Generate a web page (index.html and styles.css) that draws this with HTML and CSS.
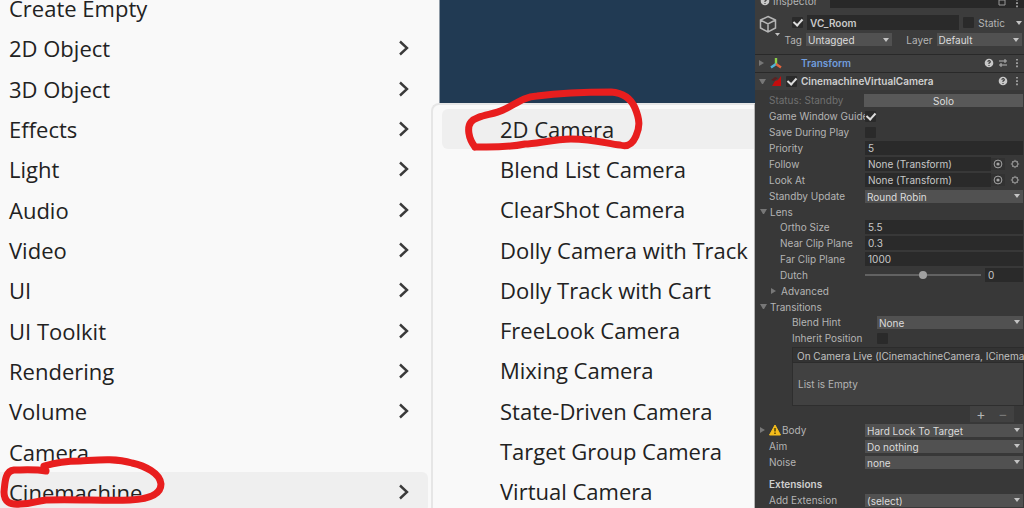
FILE: index.html
```
<!DOCTYPE html>
<html lang="en">
  <head>
    <meta charset="UTF-8" />
    <meta name="viewport" content="width=device-width, initial-scale=1.0" />
    <title>Cinemachine 2D Camera</title>
    <link rel="stylesheet" href="styles.css">
  </head>
  <body>
    <!-- shared icons -->
    <svg class="sprite" width="0" height="0">
      <symbol id="chevron" viewBox="0 0 12 18">
        <path d="M2 2.5 L9 9 L2 15.5" fill="none" stroke="#3a3a3a" stroke-width="2.4" />
      </symbol>
      <symbol id="help" viewBox="0 0 10 10">
        <circle cx="5" cy="5" r="4.3" fill="#c8c8c8" />
        <path d="M3.6 3.7 Q5 1.8 6.3 3.3 Q6.6 4.4 5 5.1 V6 M5 6.9 V8" fill="none" stroke="#3a3a3a" stroke-width="1.1" />
      </symbol>
      <symbol id="dots" viewBox="0 0 10 10">
        <path d="M5 1 V2.6 M5 4.3 V5.9 M5 7.6 V9.2" stroke="#b4b4b4" stroke-width="1.6" />
      </symbol>
      <symbol id="gear" viewBox="0 0 10 10">
        <circle cx="5" cy="5" r="2.8" fill="none" stroke="#8c8c8c" stroke-width="1.3" />
        <path d="M5 .8V2M5 8V9.2M.8 5H2M8 5H9.2M2 2l.9.9M7.1 7.1l.9.9M8 2l-.9.9M2.9 7.1L2 8" stroke="#8c8c8c" />
      </symbol>
      <symbol id="target" viewBox="0 0 10 10">
        <circle cx="5" cy="5" r="3.9" fill="none" stroke="#a5a5a5" />
        <circle cx="5" cy="5" r="1.6" fill="#a5a5a5" />
      </symbol>
    </svg>

    <main class="scene">
      <nav class="menu">
        <button>Create Empty</button>
        <button>2D Object <svg><use href="#chevron" /></svg></button>
        <button>3D Object <svg><use href="#chevron" /></svg></button>
        <button>Effects <svg><use href="#chevron" /></svg></button>
        <button>Light <svg><use href="#chevron" /></svg></button>
        <button>Audio <svg><use href="#chevron" /></svg></button>
        <button>Video <svg><use href="#chevron" /></svg></button>
        <button>UI <svg><use href="#chevron" /></svg></button>
        <button>UI Toolkit <svg><use href="#chevron" /></svg></button>
        <button>Rendering <svg><use href="#chevron" /></svg></button>
        <button>Volume <svg><use href="#chevron" /></svg></button>
        <button>Camera</button>
        <button class="active">Cinemachine <svg><use href="#chevron" /></svg></button>
      </nav>

      <nav class="submenu">
        <button class="active">2D Camera</button>
        <button>Blend List Camera</button>
        <button>ClearShot Camera</button>
        <button>Dolly Camera with Track</button>
        <button>Dolly Track with Cart</button>
        <button>FreeLook Camera</button>
        <button>Mixing Camera</button>
        <button>State-Driven Camera</button>
        <button>Target Group Camera</button>
        <button>Virtual Camera</button>
      </nav>

      <!-- hand drawn marks -->
      <svg class="marks" width="755" height="508">
        <path d="M46 471 C35 469 22 470 14 470 C5 471 5 482 4 492 C4 502 10 505 20 504 C32 504 36 501 46 500 C75 499 105 501 130 500 C150 499 161 494 161 484 C160 473 145 466 132 463 C115 458 98 460 80 461 C66 461 54 463 44 466" />
        <path d="M475 147 C468 138 467 127 471 122 C477 115 493 115 503 110 C515 105 522 97 537 96 C560 93 590 92 611 92 C625 93 632 101 635 108 C640 120 640 127 636 136 C632 145 627 147 620 145 C608 144 595 139 571 139 C555 139 535 144 525 144 C505 148 490 147 475 147" />
      </svg>
    </main>

    <aside class="inspector">
      <div class="tabs">
        <div class="tab"><svg class="icon"><use href="#help" /></svg>Inspector</div>
        <svg class="icon"><path d="M2 2h6v5H2z" fill="none" stroke="#999" /></svg>
        <svg class="icon"><use href="#dots" /></svg>
      </div>

      <header class="object">
        <svg class="cube" viewBox="0 0 22 22">
          <path d="M9 1.5 L16.5 5 V13 L9 17 L1.5 13 V5 Z M1.5 5 L9 9 L16.5 5 M9 9 V17" fill="none" stroke="#b5b5b5" stroke-width="1.5" />
          <path d="M16 18 h5 l-2.500 3z" fill="#c4c4c4" />
        </svg>
        <div class="object-rows">
          <div class="object-row">
            <input type="checkbox" aria-label="Active" checked>
            <input type="text" class="name" aria-label="Name" value="VC_Room">
            <input type="checkbox" id="static">
            <label for="static">Static</label>
            <i class="caret"></i>
          </div>
          <div class="object-row tags">
            <label for="tag">Tag</label>
            <span class="select"><select id="tag"><option>Untagged</option></select></span>
            <label for="layer" class="layer">Layer</label>
            <span class="select"><select id="layer"><option>Default</option></select></span>
          </div>
        </div>
      </header>

      <div class="component">
        <i class="fold closed"></i>
        <svg class="icon wide" viewBox="0 0 12 12">
          <path d="M6 7 V1" stroke="#8fd14a" stroke-width="2.4" />
          <path d="M6 7 L1 10.500" stroke="#4fb3d9" stroke-width="2.4" />
          <path d="M6 7 L11 10.500" stroke="#e0643c" stroke-width="2.4" />
        </svg>
        <span class="spacer"></span>
        <b class="link">Transform</b>
        <svg class="icon"><use href="#help" /></svg>
        <svg class="icon"><path d="M1 3h8M1 7h8M7 1v4M3 5v4" stroke="#b4b4b4" fill="none" /></svg>
        <svg class="icon"><use href="#dots" /></svg>
      </div>
      <div class="component">
        <i class="fold"></i>
        <svg class="icon wide" viewBox="0 0 12 12">
          <path d="M2 11 L5 6 L8 5 L11 1 V11 Z" fill="#c40d0d" />
          <path d="M1 5 L5 2 L8 3 L4 6Z" fill="#5a2222" />
        </svg>
        <input type="checkbox" aria-label="Enabled" checked>
        <b>CinemachineVirtualCamera</b>
        <svg class="icon"><use href="#help" /></svg>
        <svg class="icon"><use href="#dots" /></svg>
      </div>

      <div class="status"><span>Status: Standby</span><button>Solo</button></div>

      <div class="row"><label for="guides">Game Window Guide</label><input type="checkbox" id="guides" checked></div>
      <div class="row"><label for="save">Save During Play</label><input type="checkbox" id="save"></div>
      <div class="row"><label for="priority">Priority</label><input type="text" id="priority" value="5"></div>
      <div class="row">
        <label for="follow">Follow</label><input type="text" id="follow" value="None (Transform)">
        <svg class="icon pick"><use href="#target" /></svg><svg class="icon"><use href="#gear" /></svg>
      </div>
      <div class="row">
        <label for="look">Look At</label><input type="text" id="look" value="None (Transform)">
        <svg class="icon pick"><use href="#target" /></svg><svg class="icon"><use href="#gear" /></svg>
      </div>
      <div class="row"><label for="update">Standby Update</label><span class="select"><select id="update"><option>Round Robin</option></select></span></div>

      <div class="foldout"><i class="fold"></i>Lens</div>
      <div class="row indent"><label for="ortho">Ortho Size</label><input type="text" id="ortho" value="5.5"></div>
      <div class="row indent"><label for="near">Near Clip Plane</label><input type="text" id="near" value="0.3"></div>
      <div class="row indent"><label for="far">Far Clip Plane</label><input type="text" id="far" value="1000"></div>
      <div class="row indent">
        <label for="dutch">Dutch</label>
        <input type="range" id="dutch" min="-180" max="180" value="0">
        <input type="text" class="short" aria-label="Dutch value" value="0">
      </div>
      <div class="foldout inner"><i class="fold closed"></i>Advanced</div>

      <div class="foldout"><i class="fold"></i>Transitions</div>
      <div class="row deep"><label for="hint">Blend Hint</label><span class="select"><select id="hint"><option>None</option></select></span></div>
      <div class="row deep"><label for="inherit">Inherit Position</label><input type="checkbox" id="inherit"></div>

      <div class="events">
        <div class="events-head">On Camera Live (ICinemachineCamera, ICinema</div>
        <div class="events-body">List is Empty</div>
        <div class="events-foot"><button aria-label="Add">+</button><button aria-label="Remove" disabled>−</button></div>
      </div>

      <div class="row">
        <i class="fold closed"></i>
        <label for="body" class="warn">
          <svg class="icon wide" viewBox="0 0 12 12"><path d="M6 1 L11.500 11 H.5 Z" fill="#f5bd1b" stroke="#f5bd1b" stroke-linejoin="round" /><path d="M6 4V7.500M6 8.500V10" stroke="#3b3000" stroke-width="1.300" /></svg>Body
        </label>
        <span class="select"><select id="body"><option>Hard Lock To Target</option></select></span>
      </div>
      <div class="row"><label for="aim">Aim</label><span class="select"><select id="aim"><option>Do nothing</option></select></span></div>
      <div class="row"><label for="noise">Noise</label><span class="select"><select id="noise"><option>none</option></select></span></div>
      <h2>Extensions</h2>
      <div class="row"><label for="extension">Add Extension</label><span class="select"><select id="extension"><option>(select)</option></select></span></div>
    </aside>
  </body>
</html>
```

FILE: styles.css
```
* {
  margin: 0;
  padding: 0;
  box-sizing: border-box;
}

body {
  display: grid;
  grid-template-columns: 1fr 269px;
  height: 100vh;
  overflow: hidden;
  background: #383838;
}

button,
input,
select {
  font: inherit;
  color: inherit;
  border: none;
  background: none;
  min-width: 0;
}

.sprite {
  position: absolute;
}

/* menus */
.scene {
  position: relative;
  height: 100vh;
  overflow: hidden;
  background: #213a53;
  font-family: "Open Sans", "Noto Sans", sans-serif;
  font-size: 22px;
  color: #222;
}

.menu,
.submenu {
  display: flex;
  flex-direction: column;
  justify-content: space-between;
  background: #f9f9f9;
}

.menu {
  width: 440px;
  height: calc(100vh + 16px);
  margin-top: -12px;
  padding-right: 11px;
  border-right: 1px solid #8d99a5;
}

.menu button,
.submenu button {
  display: flex;
  align-items: center;
  justify-content: space-between;
  height: 40px;
  text-align: left;
  white-space: nowrap;
}

.menu button {
  padding: 0 18px 0 9px;
  border-radius: 0 6px 6px 0;
}

.menu svg {
  width: 12px;
  height: 18px;
}

.submenu {
  position: absolute;
  top: 103px;
  bottom: -6px;
  left: 431px;
  right: 0;
  padding: 4px 0 1px 9px;
  border: 2px solid #e6e6e6;
  border-right: 1px solid #b5b5b5;
  border-radius: 8px 0 0 0;
}

.submenu button {
  padding-left: 58px;
  border-radius: 6px 0 0 6px;
}

.menu .active,
.submenu .active {
  background: #efefef;
}

.marks {
  position: absolute;
  top: 0;
  left: 0;
  fill: none;
  stroke: #e81e1e;
  stroke-width: 7px;
  stroke-linecap: round;
  stroke-linejoin: round;
  pointer-events: none;
}

/* inspector */
.inspector {
  min-width: 0;
  height: 100vh;
  overflow: hidden;
  background: #383838;
  font-family: Inter, sans-serif;
  font-size: 10px;
  line-height: 14px;
  color: #b4b4b4;
  white-space: nowrap;
}

.icon {
  flex: none;
  width: 10px;
  height: 10px;
}

.icon.wide {
  width: 12px;
  height: 12px;
}

.tabs {
  display: flex;
  align-items: flex-end;
  gap: 5px;
  height: 8px;
  padding-right: 2px;
  background: #282828;
}

.tab {
  display: flex;
  align-items: center;
  gap: 3px;
  width: 75px;
  padding-left: 5px;
  margin-right: auto;
  background: #3c3c3c;
}

.object {
  display: flex;
  gap: 11px;
  height: 46px;
  padding: 7px 2px 0 4px;
  background: #3c3c3c;
}

.cube {
  flex: none;
  width: 22px;
  height: 22px;
}

.object-rows {
  flex: 1;
  min-width: 0;
}

.object-row {
  display: flex;
  align-items: center;
  gap: 4px;
  height: 15px;
  margin-bottom: 3px;
}

.object-row .name {
  height: 15px;
  font-weight: 600;
}

.object-row .caret {
  margin-left: 7px;
}

.object-row.tags {
  height: 13px;
}

.tags label {
  width: 18px;
  margin-left: -8px;
  text-align: right;
}

.tags .layer {
  width: 32px;
  margin-left: 5px;
}

.caret,
.select::after {
  content: "";
  width: 0;
  border: 3px solid transparent;
  border-top: 4px solid #c4c4c4;
  border-bottom: 0;
}

.component {
  display: flex;
  align-items: center;
  gap: 4px;
  height: 18px;
  padding: 0 2px 1px 4px;
  background: #3e3e3e;
  border-top: 1px solid #292929;
}

.component b {
  flex: 1;
  font-weight: 600;
  color: #d0d0d0;
}

.component .link {
  color: #719ddd;
}

.component .spacer {
  width: 11px;
}

.fold {
  flex: none;
  width: 7px;
  border: 3px solid transparent;
  border-top: 5px solid #777;
  border-bottom: 0;
}

.fold.closed {
  height: 6px;
  border: 3px solid transparent;
  border-left: 5px solid #777;
  border-right: 0;
}

.status {
  display: flex;
  align-items: center;
  height: 16px;
  margin-top: 2px;
  padding: 0 1px 0 14px;
  color: #707070;
}

.status span {
  width: 95px;
}

.status button {
  flex: 1;
  height: 13px;
  background: #585858;
  color: #ddd;
}

.row {
  display: flex;
  align-items: center;
  height: 16px;
  padding: 0 1px 0 14px;
}

.row label {
  flex: none;
  width: 96px;
}

.row.indent {
  padding-left: 25px;
}

.row.indent label {
  width: 85px;
}

.row.deep {
  padding-left: 37px;
}

.row.deep label {
  width: 85px;
}

.row .fold {
  margin: 0 2px 0 -9px;
}

.row .warn {
  display: flex;
  align-items: center;
  gap: 1px;
}

.row .icon {
  margin-right: 3px;
}

.row .icon.wide {
  margin: 0;
}

.row .pick {
  width: 14px;
  height: 12px;
  padding: 1px 2px;
  margin-right: 5px;
  background: #323232;
}

input[type="text"] {
  flex: 1;
  height: 14px;
  padding: 0 3px;
  background: #2a2a2a;
  color: #c8c8c8;
}

.row .short {
  flex: none;
  width: 38px;
}

input[type="checkbox"] {
  appearance: none;
  flex: none;
  display: grid;
  place-items: center;
  width: 11px;
  height: 11px;
  background: #2a2a2a;
  border-radius: 1px;
}

input[type="checkbox"]:checked::before {
  content: "";
  width: 4px;
  height: 7px;
  margin-bottom: 2px;
  border: solid #ddd;
  border-width: 0 2px 2px 0;
  transform: rotate(42deg);
}

input[type="range"] {
  appearance: none;
  flex: 1;
  height: 2px;
  margin-right: 4px;
  background: #626262;
}

input[type="range"]::-webkit-slider-thumb {
  appearance: none;
  width: 8px;
  height: 8px;
  border-radius: 50%;
  background: #a0a0a0;
}

.select {
  flex: 1;
  display: grid;
  align-items: center;
  height: 13px;
  background: #515151;
  color: #dcdcdc;
}

.select select,
.select::after {
  grid-area: 1 / 1;
}

.select select {
  appearance: none;
  width: 100%;
  height: 13px;
  padding: 0 2px;
}

.select::after {
  justify-self: end;
  margin-right: 3px;
  pointer-events: none;
}

.foldout {
  display: flex;
  align-items: center;
  gap: 3px;
  height: 15px;
  padding-left: 5px;
}

.foldout.inner {
  height: 16px;
  padding-left: 16px;
}

.events {
  margin: 1px 0 0 37px;
}

.events-head {
  height: 16px;
  padding-left: 4px;
  line-height: 16px;
  background: #333;
  border: 1px solid #2c2c2c;
  border-right: 0;
  color: #c0c0c0;
}

.events-body {
  display: flex;
  align-items: center;
  height: 43px;
  padding-left: 5px;
  background: #414141;
  border: 1px solid #2e2e2e;
  border-top: 0;
}

.events-foot {
  display: flex;
  width: 44px;
  height: 16px;
  margin: 0 10px 0 auto;
  background: #414141;
}

.events-foot button {
  flex: 1;
  font-size: 14px;
}

.events-foot button:disabled {
  color: #777;
}

h2 {
  height: 22px;
  padding: 7px 0 0 14px;
  font-size: 10px;
  font-weight: 600;
  color: #d0d0d0;
}
```
